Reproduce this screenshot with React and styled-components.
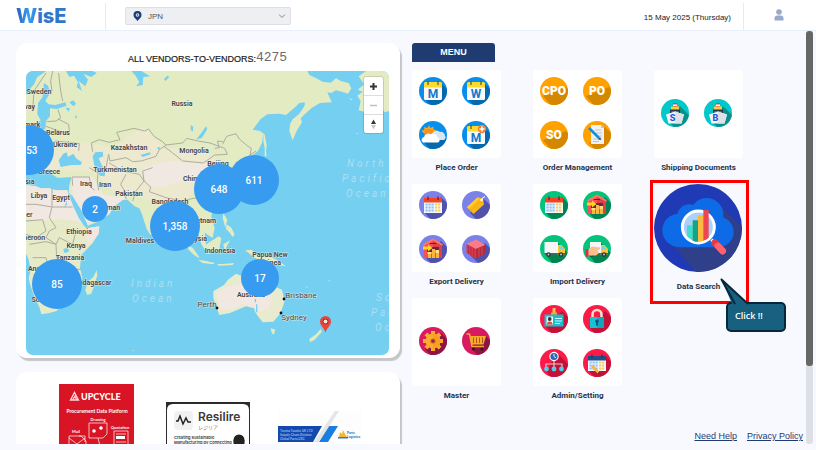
import styled, { createGlobalStyle } from "styled-components";

const GlobalStyle = createGlobalStyle`
  * {
    box-sizing: border-box;
  }
  body {
    margin: 0;
    background-color: #f8f9ff;
    font-family: "Liberation Sans", Arial, sans-serif;
    color: #222222;
  }
  button {
    font-family: inherit;
    padding: 0;
    border: none;
    cursor: pointer;
  }
`;

const Page = styled.div`
  height: 100vh;
  display: flex;
  flex-direction: column;
`;

const TopBar = styled.header`
  height: 31px;
  padding-top: 2px;
  flex: none;
  display: flex;
  align-items: center;
  background-color: #ffffff;
  border-bottom: 1px solid #e9effa;
`;
const Logo = styled.a`
  width: 89px;
  margin-left: 16px;
  display: flex;
  align-items: baseline;
  font-family: Inter, sans-serif;
  font-size: 20px;
  line-height: 20px;
  font-weight: 800;
  color: #2f76cd;
  text-decoration: none;
`;
const LogoMark = styled.span`
  background: linear-gradient(100deg, #2d6cc4 20%, #35a3f5 60%, #2f76cd);
  background-clip: text;
  color: transparent;
`;
const Divider = styled.div`
  width: 1px;
  height: 27px;
  align-self: flex-end;
  background-color: #e3ebf8;
`;
const CountryBox = styled.label`
  position: relative;
  width: 166px;
  margin-left: 19px;
  margin-right: auto;
  display: flex;
`;
const CountrySelect = styled.select`
  appearance: none;
  width: 100%;
  height: 18px;
  padding: 0 22px;
  border: 1px solid #dcdfe9;
  border-radius: 2px;
  background-color: #eeeff3;
  font-family: "Liberation Sans", Arial, sans-serif;
  font-size: 8px;
  color: #555555;
`;
const SelectPin = styled.svg`
  position: absolute;
  left: 8px;
  top: 4px;
`;
const SelectArrow = styled.svg`
  position: absolute;
  right: 5px;
  top: 6px;
`;
const Today = styled.p`
  margin: 2px 12px 0 0;
  font-size: 8px;
`;
const UserButton = styled.button`
  width: 72px;
  height: 28px;
  padding-right: 2px;
  background: none;
`;

const Body = styled.div`
  height: calc(100vh - 37px);
  display: flex;
  overflow: hidden;
`;
const Main = styled.main`
  flex: 1;
  padding: 12px 3px 0 16px;
  display: grid;
  grid-template-columns: minmax(0, 384fr) minmax(0, 391fr);
  grid-template-rows: minmax(0, 1fr);
  column-gap: 12px;
`;
const ScrollTrack = styled.div`
  width: 7px;
  margin-right: 3px;
  border-radius: 3px;
  background-color: #dde1e7;
`;
const ScrollThumb = styled.div`
  height: 81%;
  border-radius: 3px;
  background-color: #666666;
`;

const LeftColumn = styled.div`
  display: flex;
  flex-direction: column;
  gap: 14px;
`;
const Card = styled.section`
  flex: none;
  border-radius: 11px;
  background-color: #ffffff;
  box-shadow: 2px 3px 1px #c6c6c8;
`;
const MapCard = styled(Card)`
  padding: 4px 11px 3px 10px;
`;
const VendorTitle = styled.h2`
  height: 24px;
  margin: 0;
  display: flex;
  align-items: center;
  justify-content: center;
  font-size: 9px;
  font-weight: 400;
  -webkit-text-stroke: 0.2px #222222;
`;
const VendorCount = styled.span`
  padding-bottom: 3px;
  font-family: "Liberation Mono", monospace;
  font-size: 13px;
  color: #6a6a6a;
  -webkit-text-stroke: 0;
`;
const MapFrame = styled.div`
  position: relative;
  border-radius: 7px;
  overflow: hidden;
  background-color: #75cff0;
`;
const MapDrawing = styled.svg`
  display: block;
  width: 100%;
  height: auto;
  font-family: Roboto, sans-serif;
`;
const Cluster = styled.button`
  position: absolute;
  left: ${(props) => (props.$x / 363) * 100}%;
  top: ${(props) => (props.$y / 284) * 100}%;
  width: ${(props) => props.$size}px;
  height: ${(props) => props.$size}px;
  transform: translate(-50%, -50%);
  border-radius: 50%;
  background-color: #379bf0;
  color: #ffffff;
  font-family: Roboto, sans-serif;
  font-size: 10px;
  font-weight: 500;
`;
const MapControls = styled.div`
  position: absolute;
  top: 6px;
  right: 6px;
  width: 19px;
  border-radius: 3px;
  overflow: hidden;
  background-color: #ffffff;
  box-shadow: 0 0 0 1px rgba(0, 0, 0, 0.12);
`;
const ControlButton = styled.button`
  width: 100%;
  height: 18px;
  display: flex;
  align-items: center;
  justify-content: center;
  background-color: #ffffff;
  & + & {
    height: 19px;
    border-top: 1px solid #dddddd;
  }
`;

const BannerCard = styled(Card)`
  padding: 12px 24px;
  display: grid;
  grid-template-columns: repeat(3, 1fr);
  align-items: center;
  justify-items: center;
`;
const Banner = styled.a`
  display: flex;
`;

const RightColumn = styled.div`
  display: flex;
  flex-direction: column;
`;
const MenuTitle = styled.h2`
  width: 83px;
  height: 19px;
  margin: 0 0 8px;
  border-radius: 3px 3px 0 0;
  background-color: #1e3b72;
  color: #ffffff;
  font-size: 9px;
  line-height: 19px;
  text-align: center;
`;
const MenuGrid = styled.div`
  display: grid;
  grid-template-columns: repeat(3, 89px);
  column-gap: 32px;
  row-gap: 8px;
`;
const MenuGroup = styled.section`
  position: relative;
  height: 106px;
`;
const Tile = styled.div`
  height: 88px;
  padding: 0 0 2px 7px;
  border-radius: 3px;
  background-color: #ffffff;
  display: grid;
  grid-template-columns: repeat(2, 28px);
  gap: 16px 15px;
  align-content: center;
`;
const RoundButton = styled.button`
  width: ${(props) => props.$size}px;
  height: ${(props) => props.$size}px;
  border-radius: 50%;
  overflow: hidden;
  background-color: ${(props) => props.$color};
  display: block;
  svg {
    display: block;
  }
`;
const Caption = styled.h3`
  margin: ${(props) => (props.$low ? "10px" : "5px")} -10px 0;
  font-family: Roboto, sans-serif;
  font-size: 8px;
  line-height: 10px;
  font-weight: 700;
  text-align: center;
  color: #26324a;
`;
const Highlight = styled.div`
  position: absolute;
  inset: -4px -6px -14px -4px;
  border: 3px solid #ff0000;
  pointer-events: none;
`;
const Callout = styled.div`
  position: absolute;
  left: 72px;
  top: 118px;
  width: 60px;
  height: 30px;
  padding-left: 7px;
  border: 2px solid #06283a;
  border-radius: 5px;
  background-color: #17607f;
  color: #ffffff;
  font-family: "Open Sans", sans-serif;
  font-size: 9px;
  font-weight: 600;
  line-height: 23px;
`;
const CalloutTail = styled.svg`
  position: absolute;
  left: -8px;
  top: -27px;
`;
const FooterLinks = styled.footer`
  margin-top: auto;
  padding-bottom: 2px;
  display: flex;
  justify-content: flex-end;
  gap: 10px;
`;
const FooterLink = styled.a`
  font-size: 9px;
  line-height: 12px;
  color: #1e3b72;
`;

const clusters = [
  { label: "353", x: 3, y: 79, size: 50 },
  { label: "2", x: 69, y: 138, size: 26 },
  { label: "648", x: 193, y: 118, size: 50 },
  { label: "611", x: 228, y: 109, size: 50 },
  { label: "1,358", x: 149, y: 155, size: 50 },
  { label: "85", x: 31, y: 213, size: 50 },
  { label: "17", x: 234, y: 207, size: 38 },
];

const countries = [
  ["Sweden", 13, 23],
  ["Norway", -3, 38],
  ["Denmark", 0, 56],
  ["Belarus", 32, 64],
  ["Ukraine", 39, 76],
  ["Greece", 23, 103],
  ["Tunisia", -3, 113],
  ["Turkmenistan", 89, 101],
  ["Kazakhstan", 103, 79],
  ["Russia", 156, 35],
  ["Mongolia", 168, 82],
  ["Iraq", 60, 115],
  ["Iran", 79, 116],
  ["Pakistan", 103, 125],
  ["Bangladesh", 144, 133],
  ["Libya", 13, 127],
  ["Egypt", 35, 129],
  ["Niger", -2, 146],
  ["Oman", 85, 139],
  ["China", 166, 110],
  ["Beijing", 192, 95],
  ["Ethiopia", 53, 163],
  ["Kenya", 50, 177],
  ["Tanzania", 44, 189],
  ["Cameroon", 3, 169],
  ["Angola", 13, 200],
  ["South Africa", 25, 231],
  ["Madagascar", 66, 214],
  ["Maldives", 114, 172],
  ["Vietnam", 177, 152],
  ["Malaysia", 167, 170],
  ["Indonesia", 194, 182],
  ["Papua New", 244, 186],
  ["Guinea", 244, 194],
  ["Australia", 225, 226],
];

const cities = [
  ["Perth", 181, 236],
  ["Brisbane", 275, 227],
  ["Sydney", 268, 249],
];

const oceans = [
  ["North", 321, 96],
  ["Pacific", 316, 111],
  ["Ocean", 320, 126],
  ["Indian", 105, 216],
  ["Ocean", 106, 231],
  ["South", 350, 230],
  ["Pacific", 345, 245],
  ["Ocean", 349, 260],
];

const WorldMap = () => (
  <MapDrawing viewBox="0 0 363 284">
    <g transform="scale(0.33333)">
      {/* Europe and Asia */}
      <path
        fill="#e3ebc3"
        d="M0 72L12 54L24 40L34 18L52 6L60 0H844L850 12L868 20L890 32L914 35L930 22L944 30L968 36L976 52L966 68L948 62L930 58L916 66L904 64L914 86L918 94L882 96L858 110L836 130L824 142L828 154L812 180L800 208L790 180L792 160L800 145L820 128L836 104L836 94L820 96L808 108L780 132L760 128L724 130L704 144L680 176L702 180L712 188L708 216L696 240L680 252L664 290L640 350L560 400L556 440L566 470L560 500L545 492L536 484L540 520L556 546L545 548L526 520L518 490L500 460L470 430L430 440L404 470L386 484L374 492L362 474L348 430L340 412L326 406L304 386L246 388L222 374L206 358L214 378L232 392L252 396L262 408L250 430L216 452L182 466L174 452L164 420L140 380L128 366L130 340L136 320L100 324L78 310L70 292L60 300L40 308L0 300Z"
      />
      <path
        fill="#ece9cf"
        d="M0 230L90 240L170 215L260 230L350 170L420 230L540 240L600 290L520 340L470 400L400 390L330 380L260 360L200 300L130 300L0 290Z"
      />
      <path
        fill="#f1e8e2"
        d="M136 316L200 318L230 370L300 380L262 408L250 430L216 450L182 458L164 420L140 380ZM350 290L430 270L560 280L600 320L520 340L470 330L400 350L360 340Z"
      />
      {/* Africa */}
      <path
        fill="#e6eac6"
        d="M0 342L30 346L44 352L70 352L90 358L124 358L128 374L160 440L176 462L184 472L220 466L218 488L200 516L166 552L162 590L170 624L148 656L120 690L92 720L70 726L46 730L40 708L26 680L12 640L8 622L14 596L8 566L0 548Z"
      />
      <path
        fill="#f1e8e2"
        d="M0 342L30 346L44 352L70 352L90 358L124 358L128 374L160 440L176 462L150 450L100 445L40 450L0 440Z"
      />
      <path fill="#f3e5e2" d="M184 472L220 466L218 488L190 520L180 500Z" />
      {/* seas and lakes */}
      <g fill="#75cff0">
        <path d="M0 0H44L30 20L12 44L0 66Z" />
        <path d="M54 36L66 44L74 66L66 76L58 90L68 100L88 102L118 94L122 104L92 114L72 112L72 136L60 150L58 174L38 176L30 160L44 148L34 130L36 96L50 78Z" />
        <path d="M120 0L130 18L144 14L156 34L152 48L168 60L158 30L178 46L186 26L172 8L196 18L212 6L200 0Z" />
        <path d="M316 0L330 16L340 34L330 46L350 42L352 18L372 16L346 0Z" />
        <path d="M130 94L142 88L150 98L142 106ZM118 110L132 112L128 122ZM148 132L154 138L148 144ZM414 24L424 14L430 18L418 30Z" />
        <path d="M494 162L502 168L500 182L494 176ZM540 166L544 174L528 200L510 206L526 186Z" />
        <path d="M98 268L112 248L122 244L126 258L142 248L150 262L168 274L164 282L136 282L104 288Z" />
        <path d="M200 256L208 244L230 242L232 256L218 262L226 280L238 300L236 316L222 314L212 296L204 280Z" />
        <path d="M0 298L40 296L66 304L74 320L106 320L134 318L128 352L86 354L50 340L20 340L0 330Z" />
        <path d="M344 252L372 244L374 250L350 258ZM392 230L402 228L400 238Z" />
        <path d="M112 534L124 530L130 540L120 546L114 544Z" />
        <path d="M116 376L124 400L114 410L120 396Z" />
        <path d="M128 366L140 376L166 418L178 446L186 466L184 474L174 464L158 440L142 406Z" />
      </g>
      {/* borders */}
      <g fill="none" stroke="#a3a29a" strokeWidth="3" opacity="0.85">
        <path d="M98 6L104 60L110 90M60 6L44 30L24 60L20 120M80 0L74 30L78 60M96 116L104 140L90 150L62 152M60 166L100 180L128 190M64 190L68 220L90 210L160 218L158 240M90 186L130 182L128 160L96 144" />
        <path d="M200 242L196 216L220 206L250 214L282 206L272 184L324 172L356 180L368 174L384 196L410 212L420 222L400 236L390 256L346 270L320 272L300 260L252 270L248 250L240 290M420 222L470 216L482 202L516 210L552 216L596 232L604 250L566 252L532 276L470 270L440 246L414 226" />
        <path d="M250 276L290 300L340 310L354 330L350 300L380 290M140 344L138 318L190 318L196 350L206 358M190 290L216 306L214 330L218 358M300 310L284 340L296 360L300 384M320 390L330 360L354 330L374 348L370 362L420 380L468 390L520 378" />
        <path d="M78 352V408H140M0 400L30 400L78 408L70 440L90 470L70 480L60 500L90 520L100 500L140 520L150 480M0 450L50 446L60 480L30 500L0 490M10 520L60 512L90 520L92 560L120 560L124 590L164 596M20 560L60 560L70 600" />
        <path d="M590 220L602 196L630 188L640 204L666 226L676 232L672 252L690 240M566 232L580 230L574 210L592 212" />
      </g>
      {/* Madagascar, Sri Lanka, Sumatra, Java, Borneo */}
      <g fill="#e3ebc3">
        <path d="M212 598L214 612L204 646L196 668L184 672L178 658L186 632L202 618Z" />
        <path d="M482 522L500 530L518 556L520 562L504 552L488 536Z" />
        <path d="M516 566L540 570L566 576L562 580L530 576ZM572 580L600 578L624 576L620 582L580 584Z" />
        <path d="M536 524L550 514L578 496L586 502L580 534L556 540L540 536Z" />
        <path d="M592 426L604 446L598 470L590 440ZM602 460L616 470L626 490L620 498L610 484L600 474Z" />
        <path d="M592 520L612 508L600 530L606 542L596 540Z" />
        <path d="M658 538L676 536L690 548L740 560L758 570L780 586L760 582L736 578L706 572L680 556Z" />
        <path d="M712 186L716 190L722 222L720 240L722 256L716 256L716 230L712 210Z" />
        <path d="M998 16L1020 0H1089V120L1076 124L1064 108L1040 110L1020 124L998 118L1004 90L994 74L1010 62L996 56L1014 40Z" />
        <path d="M968 80L980 86L976 88ZM990 186L996 186L994 190Z" />
        <path d="M734 772L748 776L744 790L738 788Z" />
        <path d="M890 736L900 748L914 752L900 772L892 766L896 752ZM884 774L888 782L866 806L852 814L850 804L870 790Z" />
        <path d="M838 644L846 650L842 650ZM320 837L324 840L318 840ZM908 628h4v3h-4Z" />
      </g>
      {/* Australia */}
      <path
        fill="#e9ebcf"
        d="M562 660L594 642L606 626L630 608L650 616L664 628L690 640L700 606L720 620L740 644L768 656L776 690L764 726L742 752L710 754L696 736L688 724L684 712L660 706L612 726L580 732L574 716L562 680Z"
      />
      <path
        fill="#f1e8e2"
        d="M570 664L600 648L640 640L700 650L740 680L730 710L700 724L684 708L650 700L612 716L582 712Z"
      />
      <path fill="#75cff0" d="M686 684h4v10h-4ZM690 700h4v24h-4Z" />
    </g>
    <g
      fontSize="7"
      fontWeight="600"
      textAnchor="middle"
      fill="#444444"
      stroke="#f5f5ec"
      strokeWidth="1"
      strokeOpacity="0.7"
      paintOrder="stroke"
    >
      {countries.map(([name, x, y]) => (
        <text key={name} x={x} y={y}>
          {name}
        </text>
      ))}
    </g>
    <g
      fontSize="8"
      textAnchor="middle"
      fill="#444444"
      stroke="#f5f5ec"
      strokeWidth="1"
      strokeOpacity="0.7"
      paintOrder="stroke"
    >
      {cities.map(([name, x, y]) => (
        <text key={name} x={x} y={y}>
          {name}
        </text>
      ))}
    </g>
    <g fontSize="10" fontStyle="italic" letterSpacing="3" fill="#abdff4">
      {oceans.map(([name, x, y]) => (
        <text key={`${name}${x}`} x={x} y={y}>
          {name}
        </text>
      ))}
    </g>
    <g fill="#111111">
      <circle cx="191" cy="237" r="1.4" />
      <circle cx="258" cy="228" r="1.4" />
      <circle cx="255" cy="242" r="1.4" />
    </g>
    <path
      d="M299.500 261.500C297.500 256 294 254.500 294 250.500A5.500 5.500 0 0 1 305 250.500C305 254.500 301.500 256 299.500 261.500Z"
      fill="#e8453c"
    />
    <circle cx="299.500" cy="250.500" r="2.800" fill="#7b2b22" />
    <circle cx="299.500" cy="250.500" r="2" fill="#f3e9d9" />
  </MapDrawing>
);

const Shadow = ({ color }) => (
  <path d="M22 6L32 16V32H15L6 22Z" fill={color} />
);

const DayCalendar = ({ letter, plus }) => (
  <>
    <Shadow color="#0668ad" />
    <path d="M5 9H23V21.500Q23 23 21.500 23H6.500Q5 23 5 21.500Z" fill="#f7f9fb" />
    <path d="M5 6.500Q5 5 6.500 5H21.500Q23 5 23 6.500V10.500H5Z" fill="#fbdc2d" />
    <path d="M9 4V8M19 4V8" stroke="#5a5230" strokeWidth="1.200" />
    <text
      x="14"
      y="21"
      fontSize="12"
      fontWeight="700"
      textAnchor="middle"
      fill="#1379c8"
    >
      {letter}
    </text>
    {plus && (
      <>
        <circle cx="20" cy="8" r="4.200" fill="#f58233" />
        <path d="M20 5.500V10.500M17.500 8H22.500" stroke="#fff" strokeWidth="1.500" />
      </>
    )}
  </>
);

const Weather = () => (
  <>
    <path d="M25 15L32 22V32H14L5 21Z" fill="#0668ad" />
    <path
      d="M10 4L11.500 7L14.500 5.500L14.500 8.500L17.500 9L15.500 12H4.500L2.500 9.500L5.500 9L5 6L8.500 7Z"
      fill="#f5a623"
    />
    <circle cx="10" cy="12.500" r="4.800" fill="#f98f1d" />
    <path d="M14 19A4 4 0 0 1 14 11.500A5 5 0 0 1 21 11A4 4 0 0 1 26 15A2.500 2.500 0 0 1 25 19Z" fill="#d7e7f1" />
    <path d="M4 21.500A3 3 0 0 1 5 16A4.500 4.500 0 0 1 12 13.500A4 4 0 0 1 18.500 16.500A2.600 2.600 0 0 1 19 21.500Z" fill="#ffffff" />
  </>
);

const Letters = ({ text }) => (
  <>
    <path d="M26 10L32 16V32H14L3 19Z" fill="#d48700" />
    <text
      x="14"
      y="18"
      fontSize="12"
      fontWeight="900"
      textAnchor="middle"
      fill="#ffffff"
    >
      {text}
    </text>
  </>
);

const EditDocument = () => (
  <>
    <Shadow color="#d48700" />
    <path d="M8 4H18L21 7V23H8Z" fill="#eef2f7" />
    <path d="M18 4L21 7H18Z" fill="#b9c5d3" />
    <path d="M12 9H18M13 12H19M15 15H19M10 18H19M10 20.500H16" stroke="#b7c0cc" strokeWidth="0.900" />
    <path d="M6 7L16 17" stroke="#188fd0" strokeWidth="2.600" />
    <path d="M15 18.200L17.200 16L18 19Z" fill="#27435c" />
  </>
);

const MonthCalendar = ({ shadow, top = "#f24423", pencil }) => (
  <>
    <Shadow color={shadow} />
    <path d="M5 9H23V22H5Z" fill="#f2f7ff" />
    <path d="M5 7H23V11.500H5Z" fill={top} />
    <path d="M9 5.500V9M19 5.500V9" stroke="#4a2a3a" strokeWidth="1.200" />
    <path
      d="M6.500 13.500H15M6.500 16.500H15M6.500 19.500H15"
      stroke="#8fc0f5"
      strokeWidth="2"
      strokeDasharray="2.200 0.800"
    />
    <path
      d="M16 13.500H22M16 16.500H22M16 19.500H22"
      stroke="#fbd15b"
      strokeWidth="2"
      strokeDasharray="2.200 0.800"
    />
    {pencil && (
      <>
        <path d="M9 17L15.500 23.500" stroke="#f8b72c" strokeWidth="2.600" />
        <path d="M14.500 24.500L16.600 22.400L17.500 25.300Z" fill="#5a3d2b" />
      </>
    )}
  </>
);

const Tag = () => (
  <>
    <path d="M22 8L32 18V32H18L8 22Z" fill="#4f52a8" />
    <path d="M5 16L15.500 6.500L21 7.500L22 13.500L11.500 23Z" fill="#fbb514" />
    <path d="M5 16L15.500 6.500L18 7L7 18Z" fill="#ffc93a" />
    <path d="M9 19.500L19 10.500" stroke="#f2a60c" strokeWidth="0.600" />
    <circle cx="19.500" cy="9" r="1.300" fill="#ffffff" />
    <path d="M19.500 9Q20 6.500 23 5.500" stroke="#ffffff" strokeWidth="1" fill="none" />
  </>
);

const Warehouse = ({ shadow }) => (
  <>
    <Shadow color={shadow} />
    <path d="M5 9L14 4L23 9V23H5Z" fill="#f4505a" />
    <path d="M14 4L23 9V23H14Z" fill="#e23d4b" />
    <path d="M4.500 10L14 4.500L23.500 10" stroke="#ff7a66" strokeWidth="1.600" fill="none" />
    <path d="M11 8.500H17" stroke="#6d1a2c" strokeWidth="1.200" />
    <path d="M8 12H20V23H8Z" fill="#6b2a30" />
    <path d="M8.500 17H12.500V23H8.500ZM13 14H16V23H13ZM16.500 15H20V23H16.500Z" fill="#fbb63c" />
    <path d="M8.500 17H12.500V19H8.500ZM16.500 15H20V18H16.500Z" fill="#ffdd8a" />
    <path d="M4 11.500H9V9.500L13.500 13L9 16.500V14.500H4Z" fill="#ffd21f" />
  </>
);

const Container = () => (
  <>
    <path d="M23 8L32 17V32H20L6 18Z" fill="#4f52a8" />
    <path d="M4.500 9L14 4.500L23.500 10L14 14Z" fill="#ff7b84" />
    <path d="M4.500 9L14 14V23.500L4.500 18Z" fill="#d93848" />
    <path d="M14 14L23.500 10V18.500L14 23.500Z" fill="#b52b3d" />
    <path d="M6.500 10.500V19M9 12V20.300M11.500 13.200V21.600" stroke="#b92b40" strokeWidth="0.900" />
    <path d="M17 13V21.800M20 11.800V20.200" stroke="#e0505e" strokeWidth="0.700" />
  </>
);

const Truck = ({ hand }) => (
  <>
    <path d="M17 7L32 22V32H15L6 20Z" fill="#008450" />
    <path d="M17 10H21.500L25 14V19.500H17Z" fill="#fdc62e" />
    <path d="M19 11.200H21.500L23.800 14.500H19Z" fill="#6fd2f2" />
    <path d={hand ? "M7 7H18V19H7Z" : "M4.500 7H18V18H4.500Z"} fill="#f4f6f8" />
    <path d="M4.500 18H25V19.500H4.500Z" fill="#55606b" />
    <circle cx="8.500" cy="19.500" r="2.200" fill="#2c3640" />
    <circle cx="21" cy="19.500" r="2.200" fill="#2c3640" />
    <circle cx="8.500" cy="19.500" r="0.900" fill="#c7ced4" />
    <circle cx="21" cy="19.500" r="0.900" fill="#c7ced4" />
    {hand && (
      <>
        <path d="M5 14.500L9 11.500L17 12.500V14.500L14 15L15.500 16V18.500L13 20.500H5Z" fill="#fbbf8c" />
        <path d="M2.500 14H5.500V21.500H2.500Z" fill="#e2304b" />
      </>
    )}
  </>
);

const Ship = ({ letter }) => (
  <>
    <path d="M19 7L32 20V32H17L7 22Z" fill="#0a8f8c" />
    <path d="M12 4H16V8H12Z" fill="#e8413b" />
    <path d="M12 5.500H16V7H12Z" fill="#ffffff" />
    <path d="M10 7.500H18V11H10Z" fill="#f9cf3e" />
    <path d="M9 10.500H19V16H9Z" fill="#27364a" />
    <path d="M10.500 12H17.500V14.500H10.500Z" fill="#5a6d82" />
    <path d="M5 15.500L14 12.500L23 15.500L20.500 24.500H7.500Z" fill="#f3f5f7" />
    <path d="M14 12.500L23 15.500L20.500 24.500H14Z" fill="#dde2e8" />
    <text
      x="11.500"
      y="22"
      fontSize="9"
      fontWeight="800"
      textAnchor="middle"
      fill="#2053d6"
    >
      {letter}
    </text>
  </>
);

const Gear = () => (
  <>
    <Shadow color="#8c1546" />
    {[0, 45, 90, 135].map((angle) => (
      <rect
        key={angle}
        x="12"
        y="4"
        width="4"
        height="20"
        fill="#fbab2c"
        transform={`rotate(${angle} 14 14)`}
      />
    ))}
    <circle cx="14" cy="14" r="7.500" fill="#fbab2c" />
    <path d="M14 6.500A7.500 7.500 0 0 1 14 21.500Z" fill="#f8a024" />
    <circle cx="14" cy="14" r="2.600" fill="#d0671c" />
    <circle cx="14" cy="14" r="1.600" fill="#a01d50" />
  </>
);

const Cart = () => (
  <>
    <path d="M24 9L32 17V32H18L9 20Z" fill="#8c1546" />
    <path d="M4.500 7H7.500L10 19.500H22" stroke="#fbab2c" strokeWidth="1.500" fill="none" />
    <path d="M8 9H24L21.500 17.500H9.700Z" fill="#fba92a" />
    <path d="M11.500 10.500V16M14.500 10.500V16M17.500 10.500V16M20.500 10.500V16" stroke="#a8581a" strokeWidth="1" />
    <circle cx="11.500" cy="22" r="1.600" fill="#3d1426" />
    <circle cx="20" cy="22" r="1.600" fill="#3d1426" />
  </>
);

const IdCard = () => (
  <>
    <Shadow color="#c11339" />
    <path d="M12.500 3H15.500V9H12.500Z" fill="#f5c744" />
    <path d="M11 7.500H17V10.500H11Z" fill="#e7a93a" />
    <path d="M4.500 9.500H23.500V21.500H4.500Z" fill="#1bbccb" />
    <path d="M6.500 11.500H13V19.500H6.500Z" fill="#e9fbfd" />
    <circle cx="9.700" cy="14" r="1.900" fill="#46302b" />
    <path d="M7 19.500Q7 16.500 9.700 16.500Q12.500 16.500 12.500 19.500Z" fill="#e7502f" />
    <path d="M15 13.500H22M15 16H22M15 18.500H20" stroke="#d5f8fb" strokeWidth="1.200" />
  </>
);

const Lock = () => (
  <>
    <Shadow color="#c11339" />
    <path d="M9.500 13V9.500A4.500 4.500 0 0 1 18.500 9.500V13" stroke="#efe3c8" strokeWidth="2.600" fill="none" />
    <path d="M7 12H21V23H7Z" fill="#14c4d2" />
    <path d="M14 12H21V23H14Z" fill="#0ea9bd" />
    <circle cx="14" cy="16.300" r="1.800" fill="#174f88" />
    <path d="M13.300 16.500H14.700L15.200 20.500H12.800Z" fill="#174f88" />
  </>
);

const OrgClock = () => (
  <>
    <path d="M18 5L32 19V32H14L6 22Z" fill="#c11339" />
    <circle cx="14" cy="7.500" r="4.700" fill="#ffffff" />
    <circle cx="14" cy="7.500" r="3.600" fill="#2a66b8" />
    <path d="M14 5V7.500L16 9" stroke="#ffffff" strokeWidth="0.900" fill="none" />
    <path d="M14 12V18M6 18V15H22V18" stroke="#f3c3c8" strokeWidth="1.200" fill="none" />
    <circle cx="6.500" cy="20" r="2.400" fill="#4fd0ea" />
    <circle cx="14" cy="20" r="2.400" fill="#4fd0ea" />
    <circle cx="21.500" cy="20" r="2.400" fill="#4fd0ea" />
  </>
);

const DataSearch = () => (
  <svg width="88" height="88" viewBox="0 0 264 264">
    <path d="M206 72L264 130V264H126L58 186Z" fill="#303f8a" />
    <g fill="#0e6be8">
      <circle cx="75" cy="139" r="50" />
      <circle cx="106" cy="97" r="36" />
      <circle cx="158" cy="92" r="50" />
      <circle cx="193" cy="144" r="46" />
      <path d="M75 110H193V190H75Z" />
    </g>
    <path d="M172 167L206 202" stroke="#f3f6fa" strokeWidth="9" />
    <path d="M182 176L206 201" stroke="#e63946" strokeWidth="20" strokeLinecap="round" />
    <path d="M192 186L206 201" stroke="#ff6370" strokeWidth="20" strokeLinecap="round" />
    <circle cx="133" cy="129" r="48" fill="#a8d2fb" stroke="#ffffff" strokeWidth="9" />
    <path d="M99 124H116V169Q106 164 99 156Z" fill="#3ee0cd" />
    <path d="M116 109H132V173H124Q120 172 116 170Z" fill="#12a483" />
    <path d="M132 94H148V170Q140 173 132 173Z" fill="#fbb941" />
    <path d="M148 78H164V161Q158 167 148 170Z" fill="#ef4550" />
  </svg>
);

const menuGroups = [
  {
    title: "Place Order",
    color: "#088eeb",
    icons: [
      <DayCalendar letter="M" />,
      <DayCalendar letter="W" />,
      <Weather />,
      <DayCalendar letter="M" plus />,
    ],
  },
  {
    title: "Order Management",
    color: "#ffa200",
    icons: [
      <Letters text="CPO" />,
      <Letters text="PO" />,
      <Letters text="SO" />,
      <EditDocument />,
    ],
  },
  {
    title: "Shipping Documents",
    color: "#02c9c9",
    icons: [<Ship letter="S" />, <Ship letter="B" />],
  },
  {
    title: "Export Delivery",
    color: "#7a82ea",
    icons: [
      <MonthCalendar shadow="#4f52a8" />,
      <Tag />,
      <Warehouse shadow="#4f52a8" />,
      <Container />,
    ],
  },
  {
    title: "Import Delivery",
    color: "#04c47c",
    icons: [
      <MonthCalendar shadow="#008450" />,
      <Warehouse shadow="#008450" />,
      <Truck />,
      <Truck hand />,
    ],
  },
  { title: "Data Search", featured: true },
  {
    title: "Master",
    color: "#d81b60",
    icons: [<Gear />, <Cart />],
  },
  {
    title: "Admin/Setting",
    color: "#fb1a48",
    icons: [
      <IdCard />,
      <Lock />,
      <OrgClock />,
      <MonthCalendar shadow="#c11339" top="#1f4f8f" pencil />,
    ],
  },
];

const UpcycleBanner = () => (
  <svg width="75" height="106" viewBox="0 0 75 106" fontFamily="Lato, sans-serif">
    <rect width="75" height="106" fill="#d81425" />
    <path d="M11.500 16L15.500 8.500L19.500 16ZM13.500 16L17 10.500M15.500 12L18 16" fill="none" stroke="#ffd9dc" strokeWidth="1.300" />
    <text x="22" y="16" fontSize="9" fontWeight="900" fill="#ffffff">
      UPCYCLE
    </text>
    <g fill="#ffffff" textAnchor="middle">
      <text x="38" y="29" fontSize="5" fontWeight="700">
        Procurement Data Platform
      </text>
      <text x="39" y="37" fontSize="4" fontWeight="700">
        Drawing
      </text>
      <text x="17" y="49" fontSize="4" fontWeight="700">
        Mail
      </text>
      <text x="61" y="45" fontSize="4" fontWeight="700">
        Quotation
      </text>
    </g>
    <g fill="none" stroke="#ffffff" strokeWidth="0.700">
      <path d="M30 39H48V50L44 54H30ZM10 52H22L27 57V66H10ZM55 47H69V66H55ZM57 50H67M57 58H67M57 61H67M39 54L42 66M10 54L18 60L26 54M20 52H26V58" />
    </g>
    <circle cx="35" cy="47" r="1.800" fill="#ffffff" />
    <circle cx="42" cy="44" r="1.800" fill="#ffffff" />
    <path d="M57 52H66V55H57Z" fill="#ffffff" />
  </svg>
);

const ResilireBanner = () => (
  <svg width="84" height="70" viewBox="0 0 84 70" fontFamily="Inter, Noto Sans CJK JP, sans-serif">
    <rect width="84" height="70" fill="#2b2b2b" />
    <path d="M1 8Q1 2 7 2H77Q83 2 83 8V70H1Z" fill="#ffffff" />
    <rect x="8" y="9" width="19" height="19" rx="4" fill="#f1f1f2" />
    <path d="M10 19H12L14 14L17 22L20 16L22 20H25" fill="none" stroke="#222222" strokeWidth="1.500" />
    <text x="32" y="19" fontSize="12" fontWeight="600" fill="#3a3a3a">
      Resilire
    </text>
    <text x="32" y="27" fontSize="5" fill="#777777">
      レジリア
    </text>
    <g fontSize="4" fontWeight="600" fill="#333333">
      <text x="8" y="37">
        Creating Sustainable
      </text>
      <text x="8" y="42">
        Manufacturing by Connecting
      </text>
    </g>
    <circle cx="73" cy="38" r="5.500" fill="#222222" />
    <path d="M67.500 38H78.500V50H67.500Z" fill="#222222" />
  </svg>
);

const PartsBanner = () => (
  <svg width="84" height="52" viewBox="0 0 84 52" fontFamily="Inter, sans-serif">
    <rect width="84" height="32" fill="#fdfdfe" />
    <path d="M0 15H44L35 31H0Z" fill="#1548ad" />
    <path d="M50 15H60L50 31H41Z" fill="#1a7de0" />
    <path d="M57 0H61L41 31H36Z" fill="#e3e6e2" />
    <g fontSize="3" fontWeight="600" fill="#9fc6fa">
      <text x="2" y="21">
        Toyota Tsusho UK LTD
      </text>
      <text x="2" y="25">
        Supply Chain Division
      </text>
      <text x="2" y="29">
        Global Parts CRC
      </text>
    </g>
    <path d="M61 26L62 21L64 23L65 19L67 23L69 26Z" fill="#f2b632" />
    <path d="M60 26H70V27.500H60Z" fill="#2e7bd1" />
    <g fontSize="3" fontWeight="700" fill="#2472b8">
      <text x="69" y="23">
        Parts
      </text>
      <text x="69" y="27">
        Logistics
      </text>
    </g>
  </svg>
);

const App = () => {
  return (
    <>
      <GlobalStyle />
      <Page>
        <TopBar>
          <Logo href="#">
            <LogoMark>W</LogoMark>isE
          </Logo>
          <Divider />
          <CountryBox>
            <CountrySelect aria-label="Country" defaultValue="JPN">
              <option>JPN</option>
            </CountrySelect>
            <SelectPin width="9" height="10" viewBox="0 0 9 10">
              <path d="M4.500 10C2.500 7.500 0.500 6.500 0.500 4A4 4 0 0 1 8.500 4C8.500 6.500 6.500 7.500 4.500 10Z" fill="#1e3b72" />
              <circle cx="4.500" cy="4" r="1.800" fill="#dfe7f5" />
              <circle cx="4.500" cy="4" r="0.800" fill="#1e3b72" />
            </SelectPin>
            <SelectArrow width="8" height="6" viewBox="0 0 8 6">
              <path d="M1 1.500L4 4.500L7 1.500" fill="none" stroke="#888888" />
            </SelectArrow>
          </CountryBox>
          <Today>15 May 2025 (Thursday)</Today>
          <Divider />
          <UserButton aria-label="Account">
            <svg width="10" height="12" viewBox="0 0 10 12">
              <circle cx="5" cy="3" r="2.800" fill="#98a9c9" />
              <path d="M0.500 11.500V9.500Q0.500 6.500 3.500 6.500H6.500Q9.500 6.500 9.500 9.500V11.500Z" fill="#98a9c9" />
            </svg>
          </UserButton>
        </TopBar>

        <Body>
          <Main>
            <LeftColumn>
              <MapCard>
                <VendorTitle>
                  ALL VENDORS-TO-VENDORS:<VendorCount>4275</VendorCount>
                </VendorTitle>
                <MapFrame>
                  <WorldMap />
                  {clusters.map((cluster) => (
                    <Cluster
                      key={cluster.label}
                      $x={cluster.x}
                      $y={cluster.y}
                      $size={cluster.size}
                    >
                      {cluster.label}
                    </Cluster>
                  ))}
                  <MapControls>
                    <ControlButton aria-label="Zoom in">
                      <svg width="9" height="9" viewBox="0 0 9 9">
                        <path d="M4.500 1V8M1 4.500H8" stroke="#333333" strokeWidth="2" />
                      </svg>
                    </ControlButton>
                    <ControlButton aria-label="Zoom out">
                      <svg width="9" height="9" viewBox="0 0 9 9">
                        <path d="M1 4.500H8" stroke="#c0c0c0" strokeWidth="1.500" />
                      </svg>
                    </ControlButton>
                    <ControlButton aria-label="Reset north">
                      <svg width="9" height="11" viewBox="0 0 9 11">
                        <path d="M4.500 0.500L7 5H2Z" fill="#333333" />
                        <path d="M4.500 10.500L7 6H2Z" fill="#c8c8c8" />
                      </svg>
                    </ControlButton>
                  </MapControls>
                </MapFrame>
              </MapCard>
              <BannerCard>
                <Banner href="#">
                  <UpcycleBanner />
                </Banner>
                <Banner href="#">
                  <ResilireBanner />
                </Banner>
                <Banner href="#">
                  <PartsBanner />
                </Banner>
              </BannerCard>
            </LeftColumn>

            <RightColumn>
              <MenuTitle>MENU</MenuTitle>
              <MenuGrid>
                {menuGroups.map((group) =>
                  group.featured ? (
                    <MenuGroup key={group.title}>
                      <RoundButton $size={88} $color="#2039b5" aria-label={group.title}>
                        <DataSearch />
                      </RoundButton>
                      <Caption $low>{group.title}</Caption>
                      <Highlight />
                      <Callout>
                        <CalloutTail width="40" height="30" viewBox="0 0 40 30">
                          <path d="M13 29L1.500 2.500L30 29" fill="#17607f" />
                          <path
                            d="M15 27L1.500 2.500L28 27"
                            fill="none"
                            stroke="#06283a"
                            strokeWidth="2"
                            strokeLinejoin="round"
                          />
                        </CalloutTail>
                        Click !!
                      </Callout>
                    </MenuGroup>
                  ) : (
                    <MenuGroup key={group.title}>
                      <Tile>
                        {group.icons.map((icon, index) => (
                          <RoundButton
                            key={index}
                            $size={28}
                            $color={group.color}
                            aria-label={`${group.title} ${index + 1}`}
                          >
                            <svg
                              width="28"
                              height="28"
                              viewBox="0 0 28 28"
                              fontFamily="Roboto, sans-serif"
                            >
                              {icon}
                            </svg>
                          </RoundButton>
                        ))}
                      </Tile>
                      <Caption>{group.title}</Caption>
                    </MenuGroup>
                  )
                )}
              </MenuGrid>
              <FooterLinks>
                <FooterLink href="#">Need Help</FooterLink>
                <FooterLink href="#">Privacy Policy</FooterLink>
              </FooterLinks>
            </RightColumn>
          </Main>
          <ScrollTrack>
            <ScrollThumb />
          </ScrollTrack>
        </Body>
      </Page>
    </>
  );
};

export default App;
